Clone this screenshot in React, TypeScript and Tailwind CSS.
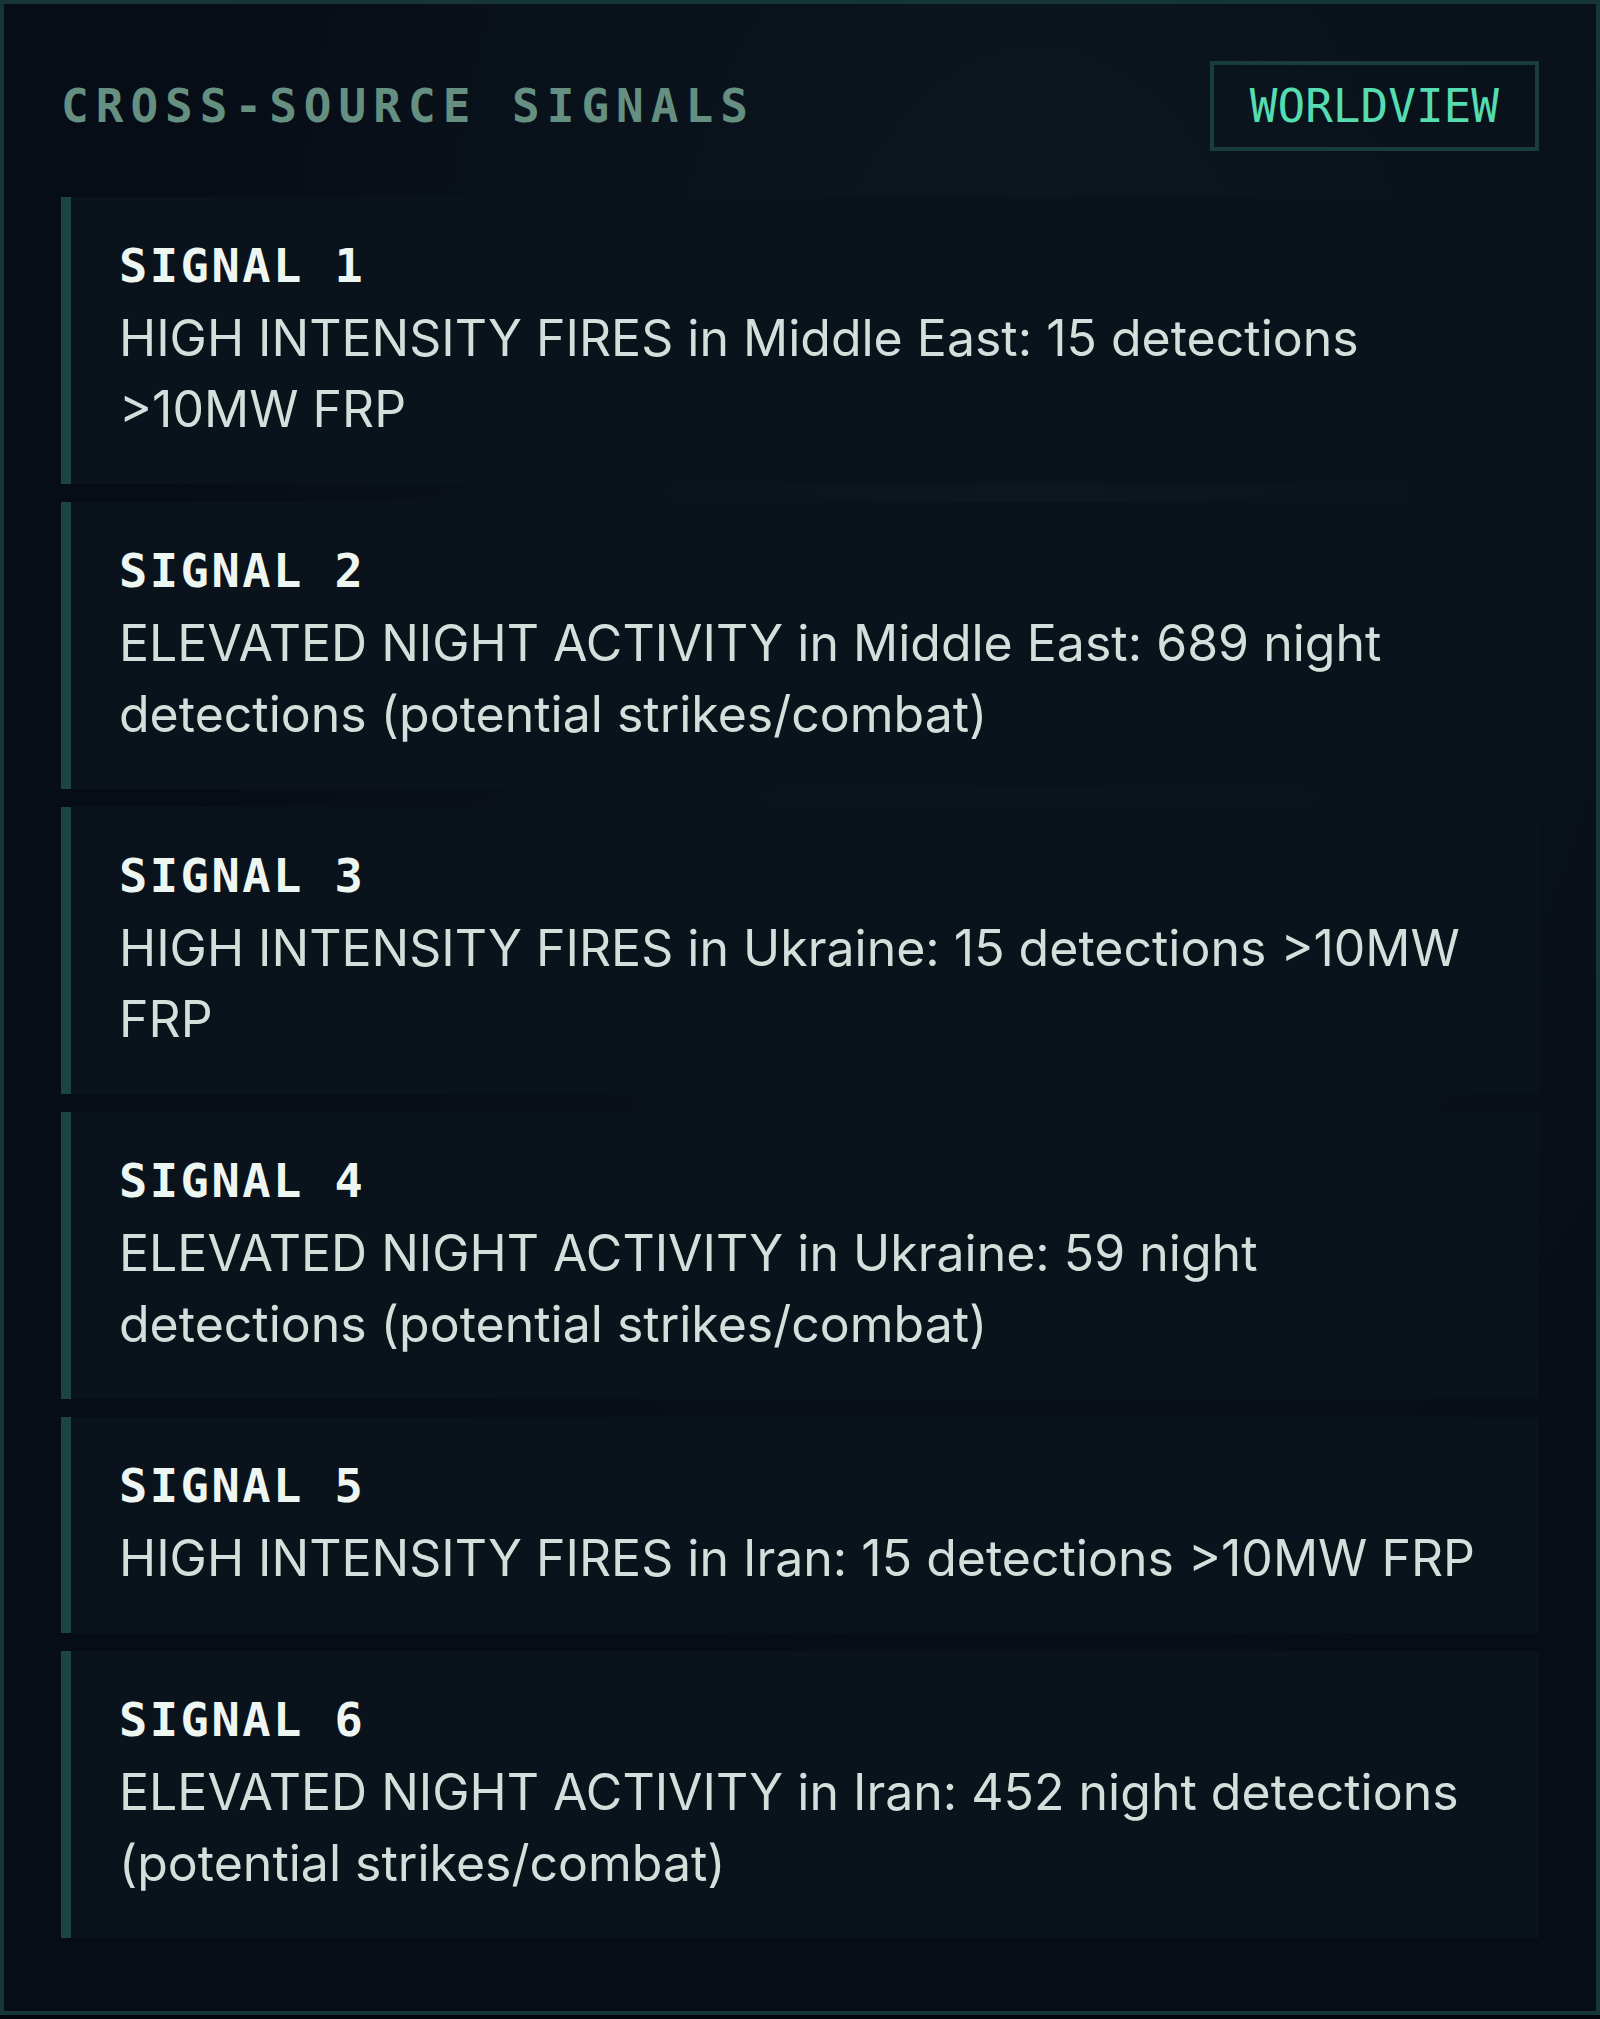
import React from "react";

const signals = [
  "HIGH INTENSITY FIRES in Middle East: 15 detections >10MW FRP",
  "ELEVATED NIGHT ACTIVITY in Middle East: 689 night detections (potential strikes/combat)",
  "HIGH INTENSITY FIRES in Ukraine: 15 detections >10MW FRP",
  "ELEVATED NIGHT ACTIVITY in Ukraine: 59 night detections (potential strikes/combat)",
  "HIGH INTENSITY FIRES in Iran: 15 detections >10MW FRP",
  "ELEVATED NIGHT ACTIVITY in Iran: 452 night detections (potential strikes/combat)",
];

const SignalCard: React.FC<{ index: number; text: string }> = ({ index, text }) => (
  <div className="flex bg-[#0a121b]">
    <div className="w-[10px] shrink-0 bg-[#1c4542]" />
    <div className="flex-1 pl-[48px] pr-[50px] pt-[39px] pb-[39px]">
      <div className="h-[60px] font-['DejaVu_Sans_Mono',monospace] text-[47px] font-bold leading-[60px] tracking-[2.5px] text-[#eef6f2]">
        SIGNAL {index}
      </div>
      <p className="mt-[7px] font-['Inter',sans-serif] text-[50px] leading-[71px] text-[#d3dfdb]">
        {text}
      </p>
    </div>
  </div>
);

export default function App() {
  return (
    <div className="min-h-screen bg-[#02050a]">
      <div className="h-[2015px] border-4 border-[#153634] bg-[#070d16] bg-[radial-gradient(ellipse_at_65%_20%,rgba(24,48,58,0.3),transparent_60%)] px-[57px] pt-[57px]">
        <div className="flex h-[90px] items-center justify-between">
          <h2 className="font-['DejaVu_Sans_Mono',monospace] text-[46px] font-bold tracking-[7px] text-[#658f81]">
            CROSS-SOURCE SIGNALS
          </h2>
          <div className="flex h-[90px] items-center border-4 border-[#183d3a] px-[36px] font-['DejaVu_Sans_Mono',monospace] text-[46px] text-[#55dcb0]">
            WORLDVIEW
          </div>
        </div>
        <div className="mt-[46px] flex flex-col gap-[18px]">
          {signals.map((s, i) => (
            <SignalCard key={i} index={i + 1} text={s} />
          ))}
        </div>
      </div>
    </div>
  );
}
